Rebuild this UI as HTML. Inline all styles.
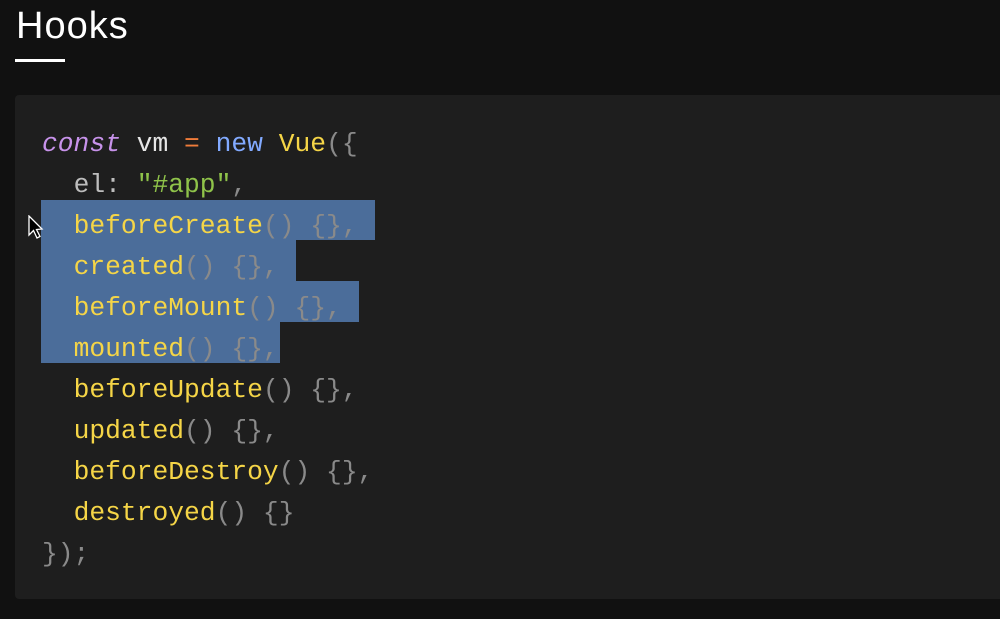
<!DOCTYPE html>
<html><head><style>
body{margin:0;width:1000px;height:619px;background:#111111;overflow:hidden;position:relative;font-family:"Liberation Sans",sans-serif}
h1{position:absolute;left:16px;top:5px;margin:0;font-weight:400;font-size:38px;color:#fff;letter-spacing:1px}
.ul{position:absolute;left:15px;top:59px;width:50px;height:3px;background:#fff}
.panel{position:absolute;left:15px;top:95px;width:990px;height:504px;background:#1e1e1e;border-radius:4px}
.sel{position:absolute;left:41px;background:#4b6d9a}
.l{position:absolute;left:42px;font-family:"Liberation Mono",monospace;font-size:26.3px;line-height:41px;height:41px;white-space:pre;color:#e6e6e6}
.k{color:#c792ea;font-style:italic}.o{color:#f07c3a}.b{color:#82aaff}.y{color:#f5d547}.g{color:#8a8a8a}.s{color:#8fc34a}.p{color:#bdbdbd}
</style></head><body>
<h1>Hooks</h1><div class="ul"></div>
<div class="panel"></div>
<div class="sel" style="top:200px;width:334px;height:40px"></div>
<div class="sel" style="top:240px;width:255px;height:41px"></div>
<div class="sel" style="top:281px;width:318px;height:41px"></div>
<div class="sel" style="top:322px;width:239px;height:41px"></div>
<div class="l" style="top:124px"><span class="k">const</span> vm <span class="o">=</span> <span class="b">new</span> <span class="y">Vue</span><span class="g">({</span></div>
<div class="l" style="top:165px">  <span class="p">el:</span> <span class="s">"#app"</span><span class="g">,</span></div>
<div class="l" style="top:206px">  <span class="y">beforeCreate</span><span class="g">() {},</span></div>
<div class="l" style="top:247px">  <span class="y">created</span><span class="g">() {},</span></div>
<div class="l" style="top:288px">  <span class="y">beforeMount</span><span class="g">() {},</span></div>
<div class="l" style="top:329px">  <span class="y">mounted</span><span class="g">() {},</span></div>
<div class="l" style="top:370px">  <span class="y">beforeUpdate</span><span class="g">() {},</span></div>
<div class="l" style="top:411px">  <span class="y">updated</span><span class="g">() {},</span></div>
<div class="l" style="top:452px">  <span class="y">beforeDestroy</span><span class="g">() {},</span></div>
<div class="l" style="top:493px">  <span class="y">destroyed</span><span class="g">() {}</span></div>
<div class="l" style="top:534px"><span class="g">});</span></div>
<svg style="position:absolute;left:28px;top:215px" width="16" height="26" viewBox="0 0 16 26"><path d="M1 1 L1 20 L5.5 15.5 L9 23 L12 21.5 L8.5 14.5 L14 14 Z" fill="#000" stroke="#fff" stroke-width="1.3"/></svg>
</body></html>
